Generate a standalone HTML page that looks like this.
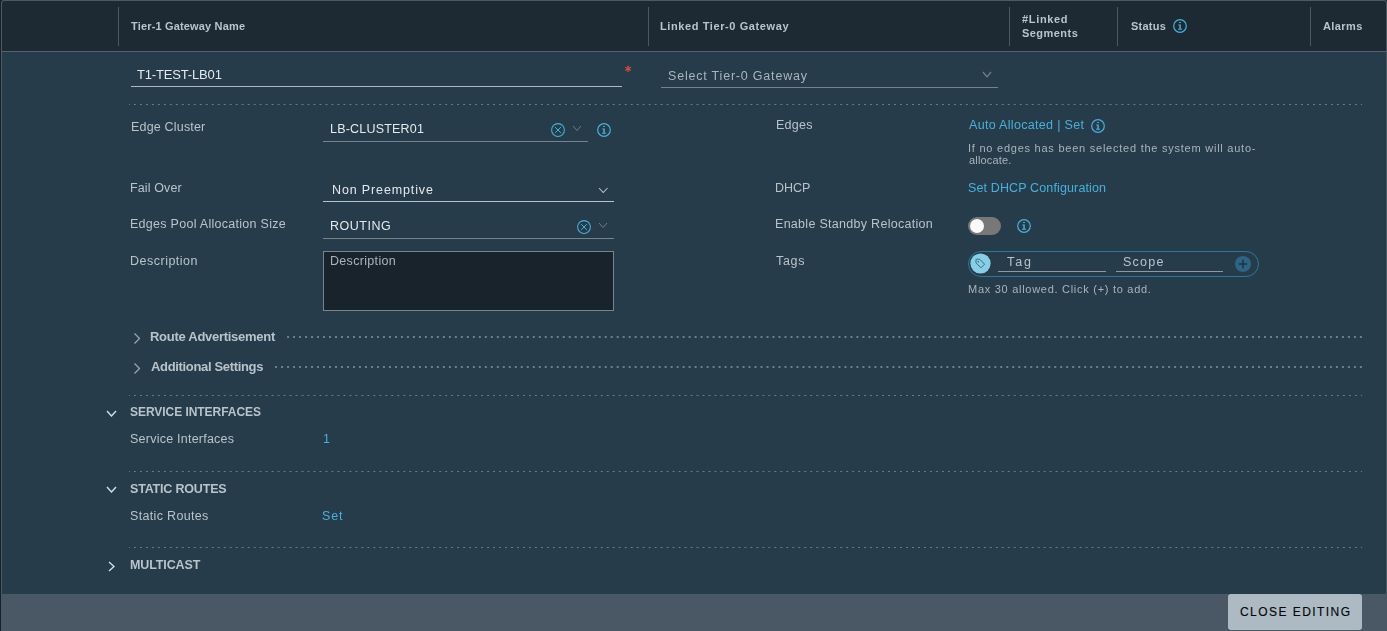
<!DOCTYPE html>
<html><head><meta charset="utf-8"><style>
html,body{margin:0;padding:0;width:1387px;height:631px;overflow:hidden;background:#16212a}
body{position:relative;font-family:"Liberation Sans",sans-serif}
.t{position:absolute;white-space:nowrap;will-change:transform}
.r{position:absolute;display:block}
</style></head><body>
<div class="r" style="left:0px;top:0px;width:1387px;height:631px;background:#16212a"></div>
<div class="r" style="left:1px;top:0px;width:1386px;height:631px;background:#4c5a66;border-radius:3px 3px 0 0"></div>
<div class="r" style="left:2px;top:1px;width:1384px;height:50px;background:#1d2a33;border-radius:2px 2px 0 0"></div>
<div class="r" style="left:2px;top:51px;width:1384px;height:1px;background:#55636f"></div>
<div class="r" style="left:2px;top:52px;width:1384px;height:542px;background:#273c4a"></div>
<div class="r" style="left:1px;top:594px;width:1386px;height:37px;background:#4a5866"></div>
<div class="r" style="left:118px;top:7px;width:1px;height:39px;background:#4a5864"></div>
<div class="r" style="left:648px;top:7px;width:1px;height:39px;background:#4a5864"></div>
<div class="r" style="left:1009px;top:7px;width:1px;height:39px;background:#4a5864"></div>
<div class="r" style="left:1117px;top:7px;width:1px;height:39px;background:#4a5864"></div>
<div class="r" style="left:1310px;top:7px;width:1px;height:39px;background:#4a5864"></div>
<svg class="r" style="left:1172.5px;top:19.0px" width="14" height="14" viewBox="0 0 14 14"><circle cx="7" cy="7" r="6.3" fill="none" stroke="#49afd9" stroke-width="1.2"/><rect x="6.0" y="3.0" width="2" height="1.1" rx="0.4" fill="#49afd9"/><path d="M5.3 5.5h2.5v4.2h1.3v1.1h-4.1v-1.1h1.3v-3.2h-1z" fill="#49afd9"/></svg>
<div class="r" style="left:131px;top:86px;width:491px;height:1px;background:#adb9c1"></div>
<div class="r" style="left:661px;top:87px;width:337px;height:1px;background:#75828c"></div>
<svg class="r" style="left:982.0px;top:71.1px;transform:rotate(0deg)" width="10" height="6.8" viewBox="0 0 10 6.8"><path d="M1 1L5.0 5.8L9 1" fill="none" stroke="#74828d" stroke-width="1.2"/></svg>
<svg class="r" style="left:129px;top:104px" width="1233" height="1"><line x1="0" y1="0.5" x2="1233" y2="0.5" stroke="#6b7a86" stroke-width="1" stroke-dasharray="2 3.9850" stroke-dashoffset="1.0350"/></svg>
<div class="r" style="left:323px;top:141px;width:265px;height:1px;background:#75838e"></div>
<svg class="r" style="left:551px;top:123px" width="14" height="14" viewBox="0 0 14 14"><circle cx="7" cy="7" r="6.4" fill="none" stroke="#49afd9" stroke-width="1.05"/><path d="M4.1 4.1L9.9 9.9M9.9 4.1L4.1 9.9" stroke="#49afd9" stroke-width="1"/></svg>
<svg class="r" style="left:572.0px;top:125.25px;transform:rotate(0deg)" width="10" height="6.5" viewBox="0 0 10 6.5"><path d="M1 1L5.0 5.5L9 1" fill="none" stroke="#6f7e89" stroke-width="1.0"/></svg>
<svg class="r" style="left:597.0px;top:123.0px" width="14" height="14" viewBox="0 0 14 14"><circle cx="7" cy="7" r="6.3" fill="none" stroke="#49afd9" stroke-width="1.2"/><rect x="6.0" y="3.0" width="2" height="1.1" rx="0.4" fill="#49afd9"/><path d="M5.3 5.5h2.5v4.2h1.3v1.1h-4.1v-1.1h1.3v-3.2h-1z" fill="#49afd9"/></svg>
<div class="r" style="left:323px;top:201px;width:291px;height:1px;background:#b9c3c9"></div>
<svg class="r" style="left:597.75px;top:186.75px;transform:rotate(0deg)" width="10.5" height="6.5" viewBox="0 0 10.5 6.5"><path d="M1 1L5.25 5.5L9.5 1" fill="none" stroke="#b9c3c8" stroke-width="1.05"/></svg>
<div class="r" style="left:323px;top:238px;width:291px;height:1px;background:#75838e"></div>
<svg class="r" style="left:577px;top:220px" width="14" height="14" viewBox="0 0 14 14"><circle cx="7" cy="7" r="6.4" fill="none" stroke="#49afd9" stroke-width="1.05"/><path d="M4.1 4.1L9.9 9.9M9.9 4.1L4.1 9.9" stroke="#49afd9" stroke-width="1"/></svg>
<svg class="r" style="left:598.0px;top:222.25px;transform:rotate(0deg)" width="10" height="6.5" viewBox="0 0 10 6.5"><path d="M1 1L5.0 5.5L9 1" fill="none" stroke="#6f7e89" stroke-width="1.0"/></svg>
<div class="r" style="left:323px;top:251px;width:291px;height:60px;background:#19232b;border:1px solid #77848f;box-sizing:border-box"></div>
<svg class="r" style="left:1091.0px;top:119.0px" width="14" height="14" viewBox="0 0 14 14"><circle cx="7" cy="7" r="6.3" fill="none" stroke="#49afd9" stroke-width="1.2"/><rect x="6.0" y="3.0" width="2" height="1.1" rx="0.4" fill="#49afd9"/><path d="M5.3 5.5h2.5v4.2h1.3v1.1h-4.1v-1.1h1.3v-3.2h-1z" fill="#49afd9"/></svg>
<div class="r" style="left:968px;top:217px;width:33px;height:18px;background:#787878;border-radius:9px"></div>
<div class="r" style="left:970px;top:219px;width:14px;height:14px;background:#fafafa;border-radius:7px"></div>
<svg class="r" style="left:1017.0px;top:219.0px" width="14" height="14" viewBox="0 0 14 14"><circle cx="7" cy="7" r="6.3" fill="none" stroke="#49afd9" stroke-width="1.2"/><rect x="6.0" y="3.0" width="2" height="1.1" rx="0.4" fill="#49afd9"/><path d="M5.3 5.5h2.5v4.2h1.3v1.1h-4.1v-1.1h1.3v-3.2h-1z" fill="#49afd9"/></svg>
<div class="r" style="left:968px;top:251px;width:291px;height:26px;border:1.3px solid #2f7699;border-radius:13px;box-sizing:border-box"></div>
<svg class="r" style="left:970px;top:253px" width="21" height="21" viewBox="0 0 21 21"><circle cx="10.5" cy="10.5" r="10.1" fill="#88cfe5"/><path d="M6 6.5v3.3l5 5 3.6-3.6-5-5h-3.3z" fill="none" stroke="#2f6e8f" stroke-width="1"/><circle cx="8.3" cy="8.8" r="0.8" fill="#2f6e8f"/></svg>
<div class="r" style="left:998px;top:271px;width:108px;height:1px;background:#8d99a2"></div>
<div class="r" style="left:1116px;top:271px;width:107px;height:1px;background:#8d99a2"></div>
<svg class="r" style="left:1235px;top:256px" width="16" height="16" viewBox="0 0 16 16"><circle cx="8" cy="8" r="8" fill="#2c6684"/><path d="M8 3.8v8.4M3.8 8h8.4" stroke="#1f3543" stroke-width="1.6"/></svg>
<svg class="r" style="left:131.0px;top:334.5px;transform:rotate(-90deg)" width="12" height="7" viewBox="0 0 12 7"><path d="M1 1L6.0 6L11 1" fill="none" stroke="#9aa5ac" stroke-width="1.3"/></svg>
<svg class="r" style="left:287px;top:336px" width="1075" height="2"><line x1="0" y1="1" x2="1075" y2="1" stroke="#6f7e89" stroke-width="2" stroke-dasharray="2 3.9936" stroke-dashoffset="5.9480"/></svg>
<svg class="r" style="left:131.0px;top:364.5px;transform:rotate(-90deg)" width="12" height="7" viewBox="0 0 12 7"><path d="M1 1L6.0 6L11 1" fill="none" stroke="#9aa5ac" stroke-width="1.3"/></svg>
<svg class="r" style="left:275px;top:366px" width="1087" height="2"><line x1="0" y1="1" x2="1087" y2="1" stroke="#6f7e89" stroke-width="2" stroke-dasharray="2 3.9936" stroke-dashoffset="5.9352"/></svg>
<svg class="r" style="left:129px;top:395px" width="1233" height="1"><line x1="0" y1="0.5" x2="1233" y2="0.5" stroke="#6b7a86" stroke-width="1" stroke-dasharray="2 3.9850" stroke-dashoffset="1.0350"/></svg>
<svg class="r" style="left:105.5px;top:410.0px;transform:rotate(0deg)" width="11" height="7" viewBox="0 0 11 7"><path d="M1 1L5.5 6L10 1" fill="none" stroke="#c5e3ee" stroke-width="1.4"/></svg>
<svg class="r" style="left:129px;top:471px" width="1233" height="1"><line x1="0" y1="0.5" x2="1233" y2="0.5" stroke="#6b7a86" stroke-width="1" stroke-dasharray="2 3.9850" stroke-dashoffset="1.0350"/></svg>
<svg class="r" style="left:105.5px;top:486.0px;transform:rotate(0deg)" width="11" height="7" viewBox="0 0 11 7"><path d="M1 1L5.5 6L10 1" fill="none" stroke="#c5e3ee" stroke-width="1.4"/></svg>
<svg class="r" style="left:129px;top:547px" width="1233" height="1"><line x1="0" y1="0.5" x2="1233" y2="0.5" stroke="#6b7a86" stroke-width="1" stroke-dasharray="2 3.9850" stroke-dashoffset="1.0350"/></svg>
<svg class="r" style="left:105.5px;top:562.5px;transform:rotate(-90deg)" width="11" height="7" viewBox="0 0 11 7"><path d="M1 1L5.5 6L10 1" fill="none" stroke="#c5e3ee" stroke-width="1.4"/></svg>
<div class="r" style="left:1228px;top:594px;width:134px;height:36px;background:#adbac3;border-radius:3px"></div>
<div class="t" style="left:131px;top:21px;font-size:11px;line-height:11px;color:#b9c4cb;font-weight:700;letter-spacing:0.167px">Tier-1 Gateway Name</div>
<div class="t" style="left:660px;top:21px;font-size:11px;line-height:11px;color:#b9c4cb;font-weight:700;letter-spacing:0.6px">Linked Tier-0 Gateway</div>
<div class="t" style="left:1022px;top:14px;font-size:11px;line-height:11px;color:#b9c4cb;font-weight:700;letter-spacing:0.667px">#Linked</div>
<div class="t" style="left:1022px;top:28px;font-size:11px;line-height:11px;color:#b9c4cb;font-weight:700;letter-spacing:0.457px">Segments</div>
<div class="t" style="left:1131px;top:21px;font-size:11px;line-height:11px;color:#b9c4cb;font-weight:700;letter-spacing:0.24px">Status</div>
<div class="t" style="left:1323px;top:21px;font-size:11px;line-height:11px;color:#b9c4cb;font-weight:700;letter-spacing:0.4px">Alarms</div>
<div class="t" style="left:137px;top:68px;font-size:13px;line-height:13px;color:#e3e9ec;font-weight:400;letter-spacing:-0.164px">T1-TEST-LB01</div>
<div class="t" style="left:668px;top:70px;font-size:12.5px;line-height:12.5px;color:#a9b4bb;font-weight:400;letter-spacing:0.8px">Select Tier-0 Gateway</div>
<div class="t" style="left:131px;top:121px;font-size:12.5px;line-height:12.5px;color:#b8c3ca;font-weight:400;letter-spacing:0.182px">Edge Cluster</div>
<div class="t" style="left:330px;top:123px;font-size:12.5px;line-height:12.5px;color:#e3e9ec;font-weight:400;letter-spacing:0.201px">LB-CLUSTER01</div>
<div class="t" style="left:776px;top:119px;font-size:12.5px;line-height:12.5px;color:#b8c3ca;font-weight:400;letter-spacing:0.25px">Edges</div>
<div class="t" style="left:969px;top:119px;font-size:12.5px;line-height:12.5px;color:#49afd9;font-weight:400;letter-spacing:0.316px">Auto Allocated | Set</div>
<div class="t" style="left:968px;top:143px;font-size:11px;line-height:11px;color:#a9b3ba;font-weight:400;letter-spacing:0.76px">If no edges has been selected the system will auto-</div>
<div class="t" style="left:969px;top:155px;font-size:11px;line-height:11px;color:#a9b3ba;font-weight:400;letter-spacing:0.16px">allocate.</div>
<div class="t" style="left:130px;top:182px;font-size:12.5px;line-height:12.5px;color:#b8c3ca;font-weight:400;letter-spacing:0.125px">Fail Over</div>
<div class="t" style="left:332px;top:184px;font-size:12.5px;line-height:12.5px;color:#e3e9ec;font-weight:400;letter-spacing:0.862px">Non Preemptive</div>
<div class="t" style="left:775px;top:182px;font-size:12.5px;line-height:12.5px;color:#b8c3ca;font-weight:400;letter-spacing:0.0px">DHCP</div>
<div class="t" style="left:968px;top:182px;font-size:12.5px;line-height:12.5px;color:#49afd9;font-weight:400;letter-spacing:0.133px">Set DHCP Configuration</div>
<div class="t" style="left:130px;top:218px;font-size:12.5px;line-height:12.5px;color:#b8c3ca;font-weight:400;letter-spacing:0.28px">Edges Pool Allocation Size</div>
<div class="t" style="left:330px;top:220px;font-size:12.5px;line-height:12.5px;color:#e3e9ec;font-weight:400;letter-spacing:0.5px">ROUTING</div>
<div class="t" style="left:775px;top:218px;font-size:12.5px;line-height:12.5px;color:#b8c3ca;font-weight:400;letter-spacing:0.292px">Enable Standby Relocation</div>
<div class="t" style="left:130px;top:255px;font-size:12.5px;line-height:12.5px;color:#b8c3ca;font-weight:400;letter-spacing:0.5px">Description</div>
<div class="t" style="left:330px;top:255px;font-size:12.5px;line-height:12.5px;color:#a9b4bb;font-weight:400;letter-spacing:0.32px">Description</div>
<div class="t" style="left:776px;top:255px;font-size:12.5px;line-height:12.5px;color:#b8c3ca;font-weight:400;letter-spacing:0.667px">Tags</div>
<div class="t" style="left:1007px;top:256px;font-size:12.5px;line-height:12.5px;color:#b8c3ca;font-weight:400;letter-spacing:1.9px">Tag</div>
<div class="t" style="left:1123px;top:256px;font-size:12.5px;line-height:12.5px;color:#b8c3ca;font-weight:400;letter-spacing:1.25px">Scope</div>
<div class="t" style="left:968px;top:284px;font-size:11px;line-height:11px;color:#a9b3ba;font-weight:400;letter-spacing:0.719px">Max 30 allowed. Click (+) to add.</div>
<div class="t" style="left:150px;top:330px;font-size:13px;line-height:13px;color:#b8c3ca;font-weight:700;letter-spacing:-0.279px">Route Advertisement</div>
<div class="t" style="left:151px;top:360px;font-size:13px;line-height:13px;color:#b8c3ca;font-weight:700;letter-spacing:-0.333px">Additional Settings</div>
<div class="t" style="left:130px;top:406px;font-size:12px;line-height:12px;color:#b8c3ca;font-weight:700;letter-spacing:-0.047px">SERVICE INTERFACES</div>
<div class="t" style="left:130px;top:433px;font-size:12.5px;line-height:12.5px;color:#b8c3ca;font-weight:400;letter-spacing:0.235px">Service Interfaces</div>
<div class="t" style="left:323px;top:433px;font-size:12.5px;line-height:12.5px;color:#49afd9;font-weight:400;letter-spacing:0.0px">1</div>
<div class="t" style="left:130px;top:483px;font-size:12.5px;line-height:12.5px;color:#b8c3ca;font-weight:700;letter-spacing:-0.183px">STATIC ROUTES</div>
<div class="t" style="left:130px;top:510px;font-size:12.5px;line-height:12.5px;color:#b8c3ca;font-weight:400;letter-spacing:0.333px">Static Routes</div>
<div class="t" style="left:322px;top:510px;font-size:12.5px;line-height:12.5px;color:#49afd9;font-weight:400;letter-spacing:0.9px">Set</div>
<div class="t" style="left:130px;top:559px;font-size:12.5px;line-height:12.5px;color:#b8c3ca;font-weight:700;letter-spacing:-0.125px">MULTICAST</div>
<div class="t" style="left:1240px;top:606px;font-size:12px;line-height:12px;color:#050709;font-weight:400;letter-spacing:1.449px;-webkit-text-stroke:0.15px #050709;will-change:auto">CLOSE EDITING</div>
<svg class="r" style="left:624px;top:65px" width="8" height="8" viewBox="0 0 8 8"><g stroke="#d44b42" stroke-width="1.3" stroke-linecap="round"><path d="M4.1 1.2V6.6"/><path d="M1.75 2.55L6.45 5.25"/><path d="M1.75 5.25L6.45 2.55"/></g></svg>
</body></html>
